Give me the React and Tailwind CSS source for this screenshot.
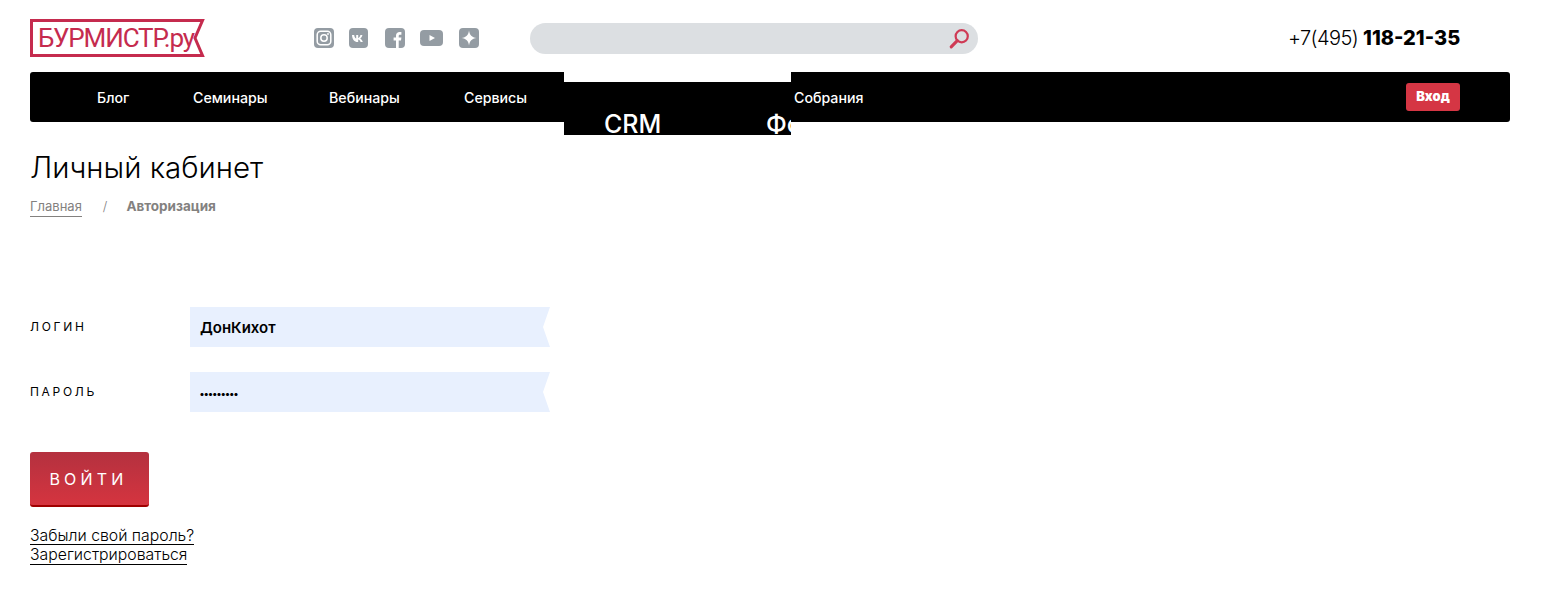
import React from "react";

function Social() {
  return (
    <div className="flex items-center w-[216px] ml-[109px]">
      <svg width="20" height="20" viewBox="0 0 20 20">
        <rect width="20" height="20" rx="4" fill="#949ca3" />
        <rect x="3.2" y="3.2" width="13.6" height="13.6" rx="3.5" fill="none" stroke="#fff" strokeWidth="1.5" />
        <circle cx="10" cy="10" r="3.2" fill="none" stroke="#fff" strokeWidth="1.5" />
        <circle cx="14" cy="6" r="0.9" fill="#fff" />
      </svg>
      <svg width="19" height="20" viewBox="0 0 19 20" className="ml-[15px]">
        <rect width="19" height="20" rx="4" fill="#949ca3" />
        <path d="M3 7h2.2c.2 2 1.2 3.4 2 3.6V7h2v2.900c.9-.1 1.800-1.200 2.200-2.900h2c-.3 1.800-1.400 3-2.200 3.500.8.400 2.100 1.500 2.600 3.500h-2.200c-.4-1.300-1.400-2.300-2.400-2.400V14h-.6C5.500 14 3.200 11.400 3 7z" fill="#fff" />
      </svg>
      <svg width="20" height="20" viewBox="0 0 20 20" className="ml-[17px]">
        <rect width="20" height="20" rx="4" fill="#949ca3" />
        <path d="M11 20v-7.500H8.600V9.600H11V7.700C11 5.200 12.500 4 14.600 4c.8 0 1.500.1 1.800.1v2.600h-1.300c-1.100 0-1.400.6-1.400 1.300v1.600h2.700l-.4 2.900h-2.300V20z" fill="#fff" />
      </svg>
      <svg width="23" height="16" viewBox="0 0 23 16" className="ml-[15px]">
        <rect width="23" height="16" rx="4" fill="#949ca3" />
        <path d="M9.500 5l5.500 3-5.500 3z" fill="#fff" />
      </svg>
      <svg width="20" height="20" viewBox="0 0 20 20" className="ml-[16px]">
        <rect width="20" height="20" rx="4" fill="#949ca3" />
        <path d="M10 2.500c.5 4.500 3 7 7.500 7.500-4.500.5-7 3-7.500 7.500-.5-4.500-3-7-7.500-7.500 4.500-.5 7-3 7.500-7.500z" fill="#fff" />
      </svg>
    </div>
  );
}

function Logo() {
  return (
    <div className="relative w-[175px] h-[38px] shrink-0">
      <svg width="175" height="38" viewBox="0 0 175 38" className="absolute inset-0">
        <path d="M1.500 1.500H172.500L165 19L172.500 36.500H1.500Z" fill="none" stroke="#c52b4e" strokeWidth="3" />
      </svg>
      <span className="absolute left-[8px] top-[4px] text-[26px] leading-[30px] text-[#c52b4e] tracking-[-1.1px] font-['Roboto',sans-serif] whitespace-nowrap">
        БУРМИСТР.ру
      </span>
    </div>
  );
}

function Ribbon({ children }) {
  return (
    <div className="w-[360px] h-10 bg-[#e8f0fe] pl-[10px] pt-[2px] flex items-center text-[15px] font-semibold text-black [clip-path:polygon(0_0,100%_0,calc(100%-7px)_50%,100%_100%,0_100%)]">
      {children}
    </div>
  );
}

export default function App() {
  return (
    <div className="w-[1547px] h-[596px] bg-white overflow-hidden pl-[30px] pr-[37px] font-['Inter',sans-serif] text-black">
      <header className="flex items-center h-[72px] pt-[4px]">
        <Logo />
        <Social />
        <div className="w-[448px] h-[31px] rounded-full bg-[#dcdfe2] flex items-center justify-end pr-[8px]">
          <svg width="21" height="21" viewBox="0 0 19 19">
            <circle cx="11.500" cy="7.500" r="5.500" fill="none" stroke="#cf3a55" strokeWidth="2" />
            <path d="M7.500 11.500L2 17" stroke="#cf3a55" strokeWidth="2.800" strokeLinecap="round" />
          </svg>
        </div>
        <div className="ml-[310px] text-[20px] whitespace-nowrap">
          <span className="font-light tracking-[-0.6px]">+7(495) </span>
          <span className="font-extrabold tracking-[0px]">118-21-35</span>
        </div>
      </header>

      <nav className="flex items-start h-[50px] bg-black rounded-[3px] text-white text-[14.2px] font-medium pl-[67px] pr-[50px]">
        <a className="mt-[17px] leading-[18px] w-[96px]">Блог</a>
        <a className="mt-[17px] leading-[18px] w-[136px]">Семинары</a>
        <a className="mt-[17px] leading-[18px] w-[135px]">Вебинары</a>
        <a className="mt-[17px] leading-[18px] w-[100px]">Сервисы</a>
        <div className="w-[227px] h-[63px] shrink-0 border-t-[10px] border-white bg-black overflow-hidden relative text-[25px] font-medium">
          <span className="absolute left-[40px] top-[27px] leading-[30px]">CRM</span>
          <span className="absolute left-[202px] top-[27px] leading-[30px]">Форум</span>
        </div>
        <a className="ml-[3px] mt-[17px] leading-[18px]">Собрания</a>
        <button className="ml-auto mt-[11px] w-[54px] h-[28px] rounded-[3px] bg-[#d53644] text-white text-[13px] font-black">
          Вход
        </button>
      </nav>

      <h1 className="mt-[25px] text-[29.5px] leading-[40px] font-light">Личный кабинет</h1>
      <div className="flex items-start mt-[9px] text-[13px] leading-[20px] text-[#83817f]">
        <a className="border-b border-[#83817f] h-[21px]">Главная</a>
        <span className="ml-[21px] font-light">/</span>
        <span className="ml-[19px] font-bold text-[13.5px]">Авторизация</span>
      </div>

      <form className="mt-[90px]">
        <div className="flex items-center">
          <label className="w-[160px] text-[12px] tracking-[2.700px] font-normal">ЛОГИН</label>
          <Ribbon>ДонКихот</Ribbon>
        </div>
        <div className="flex items-center mt-[25px]">
          <label className="w-[160px] text-[12px] tracking-[2.700px] font-normal">ПАРОЛЬ</label>
          <Ribbon><span className="text-[10px] tracking-[0.25px] font-black">•••••••••</span></Ribbon>
        </div>
        <button type="button" className="mt-[40px] block w-[119px] h-[55px] pr-[2px] rounded-[3px] border-b-[2px] border-[#a00000] bg-linear-to-b from-[#b4313f] to-[#d5343f] text-white text-[16px] tracking-[4.200px] font-normal">
          ВОЙТИ
        </button>
      </form>

      <div className="mt-[19px] flex flex-col items-start text-[15.8px] leading-[19px] font-light">
        <a className="border-b border-black h-[19px]">Забыли свой пароль?</a>
        <a className="border-b border-black h-[20px]">Зарегистрироваться</a>
      </div>
    </div>
  );
}
